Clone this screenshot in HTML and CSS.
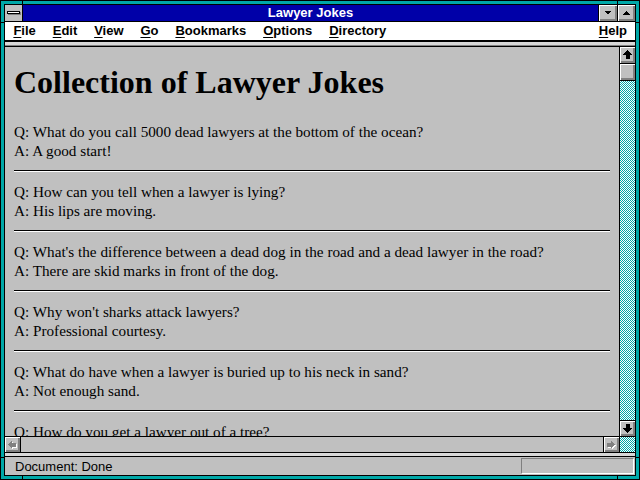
FILE: index.html
```html
<!DOCTYPE html>
<html>
<head>
<meta charset="utf-8">
<title>Lawyer Jokes</title>
<link rel="stylesheet" href="styles.css">
</head>
<body>
<div class="window">
  <div class="notch notch-top1"></div>
  <div class="notch notch-top2"></div>
  <div class="notch notch-bot1"></div>
  <div class="notch notch-bot2"></div>
  <div class="notch notch-left1"></div>
  <div class="notch notch-left2"></div>
  <div class="notch notch-right1"></div>
  <div class="notch notch-right2"></div>
  <div class="frame">
    <div class="titlebar">
      <div class="sysmenu"><span class="sysbar"></span></div>
      <div class="title">Lawyer Jokes</div>
      <div class="tbtn tbtn-min">
        <svg width="17" height="16" viewBox="0 0 17 16" shape-rendering="crispEdges"><polygon points="5,6 12,6 8.5,9.5" fill="#000"/></svg>
      </div>
      <div class="tbtn tbtn-max">
        <svg width="17" height="16" viewBox="0 0 17 16" shape-rendering="crispEdges"><polygon points="5,9.5 12,9.5 8.5,6" fill="#000"/></svg>
      </div>
    </div>
    <div class="menubar">
      <span class="menuitem"><u>F</u>ile</span>
      <span class="menuitem"><u>E</u>dit</span>
      <span class="menuitem"><u>V</u>iew</span>
      <span class="menuitem"><u>G</u>o</span>
      <span class="menuitem"><u>B</u>ookmarks</span>
      <span class="menuitem"><u>O</u>ptions</span>
      <span class="menuitem"><u>D</u>irectory</span>
      <span class="menuitem menu-help"><u>H</u>elp</span>
    </div>
    <div class="edge"></div>
    <div class="main">
      <div class="content">
        <h1 class="heading">Collection of Lawyer Jokes</h1>
        <div class="joke">Q: What do you call 5000 dead lawyers at the bottom of the ocean?<br>A: A good start!</div>
        <hr class="sep">
        <div class="joke">Q: How can you tell when a lawyer is lying?<br>A: His lips are moving.</div>
        <hr class="sep">
        <div class="joke">Q: What's the difference between a dead dog in the road and a dead lawyer in the road?<br>A: There are skid marks in front of the dog.</div>
        <hr class="sep">
        <div class="joke">Q: Why won't sharks attack lawyers?<br>A: Professional courtesy.</div>
        <hr class="sep">
        <div class="joke">Q: What do have when a lawyer is buried up to his neck in sand?<br>A: Not enough sand.</div>
        <hr class="sep">
        <div class="joke">Q: How do you get a lawyer out of a tree?</div>
      </div>
      <div class="vscroll">
        <div class="sbtn sbtn-up">
          <svg width="15" height="16" viewBox="0 0 15 16" shape-rendering="crispEdges"><polygon points="7.5,3 12,8 9.5,8 9.5,12 5.5,12 5.5,8 3,8" fill="#000"/></svg>
        </div>
        <div class="sbtn sbtn-thumb"></div>
        <div class="track"></div>
        <div class="sbtn sbtn-down">
          <svg width="15" height="15" viewBox="0 0 15 15" shape-rendering="crispEdges"><polygon points="7.5,12 12,7 9.5,7 9.5,3 5.5,3 5.5,7 3,7" fill="#000"/></svg>
        </div>
      </div>
    </div>
    <div class="hscroll">
      <div class="hbtn hbtn-left">
        <svg width="15" height="15" viewBox="0 0 15 15" shape-rendering="crispEdges">
          <polygon points="4,8.5 8,4.5 8,6.5 12,6.5 12,10.5 8,10.5 8,12.5" fill="#fff"/>
          <polygon points="3,7.5 7,3.5 7,5.5 11,5.5 11,9.5 7,9.5 7,11.5" fill="#808080"/>
        </svg>
      </div>
      <div class="htrack"></div>
      <div class="hbtn hbtn-right">
        <svg width="15" height="15" viewBox="0 0 15 15" shape-rendering="crispEdges">
          <polygon points="12,8.5 8,4.5 8,6.5 4,6.5 4,10.5 8,10.5 8,12.5" fill="#fff"/>
          <polygon points="11,7.5 7,3.5 7,5.5 3,5.5 3,9.5 7,9.5 7,11.5" fill="#808080"/>
        </svg>
      </div>
      <div class="corner"></div>
    </div>
    <div class="band"></div>
    <div class="statusbar">
      <span class="status-text">Document: Done</span>
      <span class="progress"></span>
    </div>
  </div>
</div>
</body>
</html>
```

FILE: styles.css
```css
html, body {
  margin: 0;
  padding: 0;
  background: #c0c0c0;
}

.window {
  position: relative;
  width: 640px;
  height: 480px;
  box-sizing: border-box;
  border: 1px solid #000;
  background: #00a8a8;
  padding: 3px;
  overflow: hidden;
}

.notch {
  position: absolute;
  background: #000;
}
.notch-top1 { left: 21px; top: -1px; width: 1px; height: 4px; }
.notch-top2 { left: 616px; top: -1px; width: 1px; height: 4px; }
.notch-bot1 { left: 21px; bottom: -1px; width: 1px; height: 4px; }
.notch-bot2 { left: 616px; bottom: -1px; width: 1px; height: 4px; }
.notch-left1 { left: -1px; top: 21px; width: 4px; height: 1px; }
.notch-left2 { left: -1px; top: 456px; width: 4px; height: 1px; }
.notch-right1 { right: -1px; top: 21px; width: 4px; height: 1px; }
.notch-right2 { right: -1px; top: 456px; width: 4px; height: 1px; }

.frame {
  height: 100%;
  box-sizing: border-box;
  border: 1px solid #000;
  background: #c0c0c0;
  display: flex;
  flex-direction: column;
}

/* Title bar */
.titlebar {
  height: 16px;
  border-bottom: 1px solid #000;
  display: flex;
  flex: none;
}
.sysmenu {
  width: 17px;
  border-right: 1px solid #000;
  background: #c0c0c0;
  position: relative;
}
.sysbar {
  position: absolute;
  left: 2px;
  top: 6px;
  width: 11px;
  height: 1px;
  border: 1px solid #000;
  background: #fff;
  box-shadow: 1px 1px 0 #808080;
}
.title {
  flex: 1;
  background: #0000a8;
  color: #fff;
  font-family: "Liberation Sans", Arial, sans-serif;
  font-weight: bold;
  font-size: 13px;
  line-height: 16px;
  text-align: center;
}
.tbtn {
  border-left: 1px solid #000;
  background: #c0c0c0;
  box-shadow: inset 1px 1px 0 #fff, inset -1px -1px 0 #808080, inset -2px -2px 0 #808080;
  display: flex;
}
.tbtn-min { width: 18px; }
.tbtn-max { width: 17px; }

/* Menu bar */
.menubar {
  height: 18px;
  border-bottom: 2px solid #000;
  background: #fff;
  display: flex;
  flex: none;
  font-family: "Liberation Sans", Arial, sans-serif;
  font-weight: bold;
  font-size: 13px;
  line-height: 18px;
  color: #000;
}
.menuitem {
  padding: 0 8.5px 0 8.4px;
}
.menuitem u {
  text-decoration-thickness: 1px;
  text-underline-offset: 2px;
}
.menu-help {
  margin-left: auto;
  padding-right: 8px;
}

.edge {
  height: 5px;
  flex: none;
  background: linear-gradient(#d8d8d8 0 3px, #808080 3px 4px, #000 4px 5px);
}

/* Main area */
.main {
  flex: 1;
  display: flex;
  min-height: 0;
}
.content {
  flex: 1;
  overflow: hidden;
  padding: 0 9px;
  font-family: "Liberation Serif", "Times New Roman", serif;
  font-size: 15.2px;
  line-height: 19px;
  color: #000;
}
.heading {
  margin: 17px 0 21px;
  font-size: 32px;
  line-height: 37px;
  font-weight: bold;
}
.joke {
  margin: 0;
  white-space: nowrap;
}
.sep {
  margin: 10px 0;
  height: 0;
  border: 0;
  border-top: 1px solid #000;
  border-bottom: 1px solid #fff;
}

.vscroll {
  width: 15px;
  border-left: 1px solid #000;
  display: flex;
  flex-direction: column;
}
.sbtn {
  background: #c0c0c0;
  box-shadow: inset 1px 1px 0 #fff, inset -1px -1px 0 #808080, inset -2px -2px 0 #808080;
  flex: none;
  display: flex;
}
.sbtn-up { height: 16px; border-bottom: 1px solid #000; }
.sbtn-thumb { height: 16px; border-bottom: 1px solid #000; }
.sbtn-down { height: 15px; border-top: 1px solid #000; }
.track {
  flex: 1;
  background-color: #fff;
  background-image: repeating-conic-gradient(#00a8a8 0 25%, #ffffff 0 50%);
  background-size: 2px 2px;
}

/* Horizontal scrollbar */
.hscroll {
  height: 15px;
  flex: none;
  border-top: 1px solid #000;
  border-bottom: 1px solid #000;
  display: flex;
}
.hbtn {
  width: 15px;
  background: #c0c0c0;
  box-shadow: inset 1px 1px 0 #fff, inset -1px -1px 0 #808080, inset -2px -2px 0 #808080;
  display: flex;
}
.hbtn-left { border-right: 1px solid #000; }
.hbtn-right { border-left: 1px solid #000; border-right: 1px solid #000; }
.htrack {
  flex: 1;
  background: #c0c0c0;
}
.corner {
  width: 15px;
  background-color: #fff;
  background-image: repeating-conic-gradient(#00a8a8 0 25%, #ffffff 0 50%);
  background-size: 2px 2px;
}

.band {
  height: 3px;
  flex: none;
  background: #d8d8d8;
  border-bottom: 1px solid #000;
}

/* Status bar */
.statusbar {
  height: 18px;
  flex: none;
  display: flex;
  align-items: center;
  font-family: "Liberation Sans", Arial, sans-serif;
  font-size: 13px;
  color: #000;
}
.status-text {
  padding-left: 10px;
  flex: 1;
}
.progress {
  width: 111px;
  height: 14px;
  margin-right: 1px;
  border-top: 1px solid #808080;
  border-left: 1px solid #808080;
  border-bottom: 1px solid #fff;
  border-right: 1px solid #fff;
}
```
